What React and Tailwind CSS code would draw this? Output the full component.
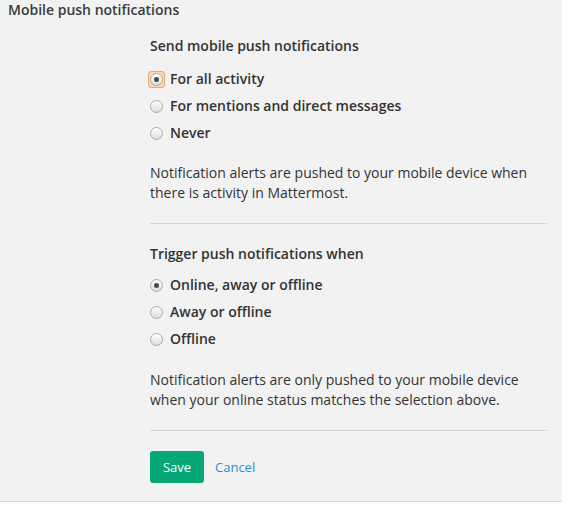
import React from "react";

function Radio({ checked, focused, label }) {
  return (
    <label className="flex items-center h-[20px] text-[14px] leading-[20px] font-semibold text-[#333]">
      <span className="relative w-[13px] h-[13px] flex items-center justify-center">
        {focused && (
          <span className="absolute -inset-[2px] rounded-[3px] border border-[#eda86a] bg-[#f9d9b8]" />
        )}
        <span className="relative w-[13px] h-[13px] rounded-full border border-[#ababab] bg-gradient-to-b from-[#ffffff] to-[#dcdcdc] flex items-center justify-center">
          {checked && <span className="w-[5px] h-[5px] rounded-full bg-[#4a4a4a]" />}
        </span>
      </span>
      <span className="ml-[7px]">{label}</span>
    </label>
  );
}

export default function App() {
  return (
    <div className="w-[574px] h-[511px] bg-white" style={{ fontFamily: '"Open Sans", sans-serif' }}>
      <div className="w-[562px] bg-[#f2f2f2] border-b border-[#d9d9d9] pb-[18px]">
        <div className="pl-2 text-[14px] leading-[20px] font-semibold text-[#3a3a3a]">Mobile push notifications</div>
        <div className="ml-[150px] w-[397px] mt-[16px]">
          <div className="text-[14px] leading-[20px] font-semibold text-[#333]">Send mobile push notifications</div>
          <div className="mt-[13px] flex flex-col gap-[7px]">
            <Radio checked focused label="For all activity" />
            <Radio label="For mentions and direct messages" />
            <Radio label="Never" />
          </div>
          <p className="mt-[20px] text-[14px] leading-[20px] text-[#333]">
            Notification alerts are pushed to your mobile device when there is activity in Mattermost.
          </p>
          <div className="mt-[20px] h-px bg-[#d6d6d6]" />
          <div className="mt-[20px] text-[14px] leading-[20px] font-semibold text-[#333]">Trigger push notifications when</div>
          <div className="mt-[11px] flex flex-col gap-[7px]">
            <Radio checked label="Online, away or offline" />
            <Radio label="Away or offline" />
            <Radio label="Offline" />
          </div>
          <p className="mt-[21px] text-[14px] leading-[20px] text-[#333]">
            Notification alerts are only pushed to your mobile device when your online status matches the selection above.
          </p>
          <div className="mt-[20px] h-px bg-[#d6d6d6]" />
          <div className="mt-[20px] flex items-center">
            <button className="w-[54px] h-[32px] pt-px rounded-[3px] bg-[#06a776] text-white text-[13px]">Save</button>
            <button className="ml-[11px] pt-px text-[13px] text-[#2a8fd6]">Cancel</button>
          </div>
        </div>
      </div>
    </div>
  );
}
